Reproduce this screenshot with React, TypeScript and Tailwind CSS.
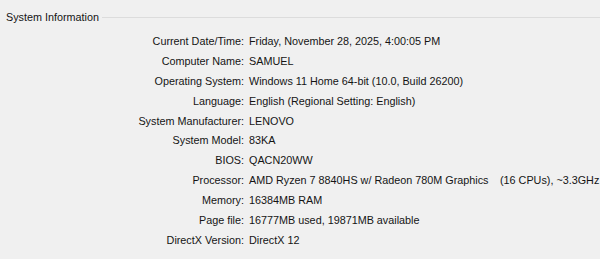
import React from "react";

const rows: [string, React.ReactNode][] = [
  ["Current Date/Time:", "Friday, November 28, 2025, 4:00:05 PM"],
  ["Computer Name:", "SAMUEL"],
  ["Operating System:", "Windows 11 Home 64-bit (10.0, Build 26200)"],
  ["Language:", "English (Regional Setting: English)"],
  ["System Manufacturer:", "LENOVO"],
  ["System Model:", "83KA"],
  ["BIOS:", "QACN20WW"],
  [
    "Processor:",
    <span className="flex">
      <span className="w-[251px] shrink-0">AMD Ryzen 7 8840HS w/ Radeon 780M Graphics</span>
      <span className="shrink-0">(16 CPUs), ~3.3GHz</span>
    </span>,
  ],
  ["Memory:", "16384MB RAM"],
  ["Page file:", "16777MB used, 19871MB available"],
  ["DirectX Version:", "DirectX 12"],
];

export default function App() {
  return (
    <div
      className="w-[600px] h-[259px] bg-[#f0f0f0] text-[#141414] overflow-hidden"
      style={{ fontFamily: '"Liberation Sans", Arial, sans-serif', fontSize: "10.8px" }}
    >
      <div className="flex items-center h-[32px] pt-[2px]">
        <span className="pl-[6px] pr-[3px] leading-none">System Information</span>
        <div className="flex-1 h-[1px] bg-[#dcdcdc]" />
      </div>
      <div className="grid grid-cols-[244px_1fr] gap-x-[5px]">
        {rows.map(([k, v], i) => (
          <React.Fragment key={i}>
            <div className="text-right h-[19.9px] leading-[19.9px] whitespace-nowrap">{k}</div>
            <div className="h-[19.9px] leading-[19.9px] whitespace-nowrap overflow-visible">{v}</div>
          </React.Fragment>
        ))}
      </div>
    </div>
  );
}
